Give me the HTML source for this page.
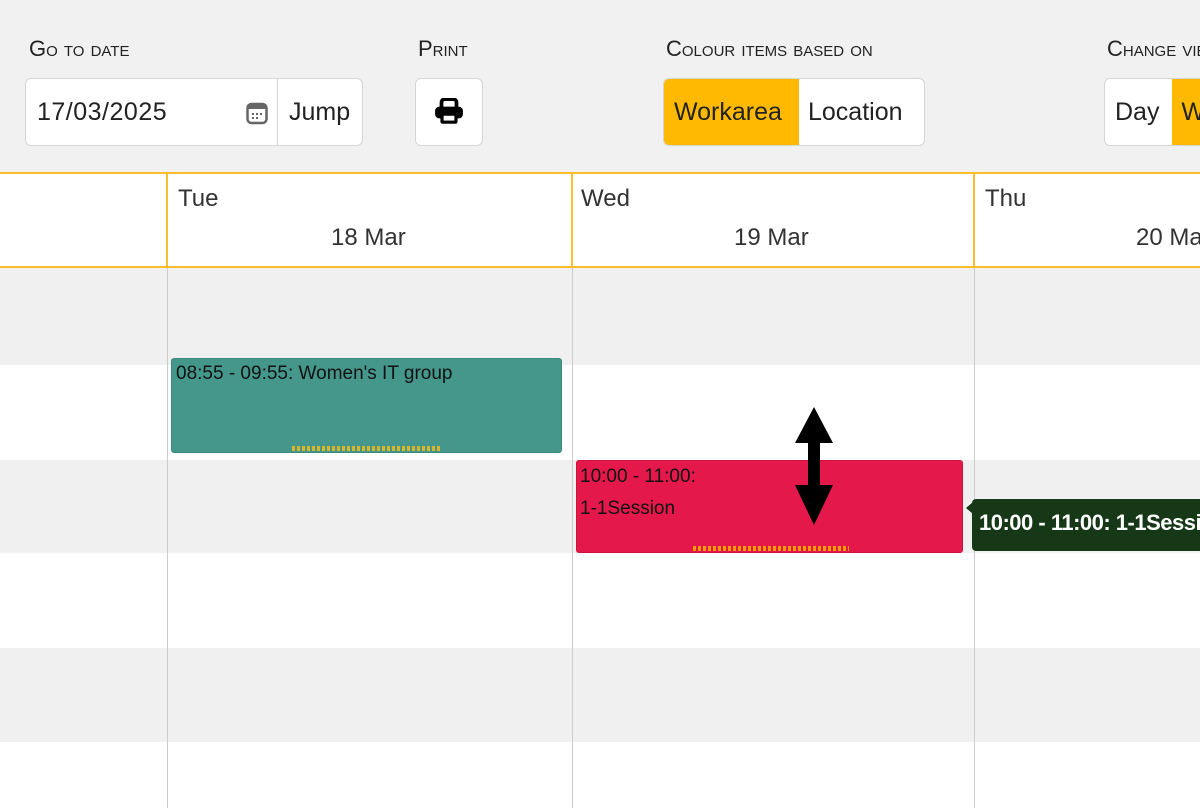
<!DOCTYPE html>
<html><head><meta charset="utf-8"><style>
*{box-sizing:border-box;margin:0;padding:0}
body{width:1200px;height:808px;overflow:hidden;background:#f1f1f1;font-family:"Liberation Sans",sans-serif;position:relative;color:#222}
.lbl{position:absolute;top:36px;font-size:22px;font-variant:small-caps;color:#222;white-space:nowrap}
.box{position:absolute;top:78px;height:68px;background:#fff;border:1px solid #d6d6d6;border-radius:6px;display:flex;align-items:center;font-size:25px;overflow:hidden;white-space:nowrap}
.seg{height:100%;display:flex;align-items:center;padding:0 9px}
.cal{position:absolute;top:0;left:0;width:1200px;height:808px}
.ev{position:absolute;border-radius:3px;font-size:19px;color:#111}
.h{position:absolute;font-size:24px;color:#333;white-space:nowrap}
</style></head><body>
<div class="lbl" style="left:29px">Go to date</div>
<div class="lbl" style="left:418px">Print</div>
<div class="lbl" style="left:666px">Colour items based on</div>
<div class="lbl" style="left:1107px">Change view</div>
<div class="box" style="left:25px;width:338px">
 <div class="seg" style="width:251px;padding-left:11px;position:relative;letter-spacing:0.5px">17/03/2025
  <svg style="position:absolute;right:9px;top:22px" width="22" height="24" viewBox="0 0 22 24"><rect x="1.5" y="3" width="19" height="19" rx="4" fill="none" stroke="#666" stroke-width="2.5"/><rect x="2" y="3" width="18" height="5" fill="#666"/><g fill="#666"><rect x="6" y="12" width="2" height="2"/><rect x="10" y="12" width="2" height="2"/><rect x="14" y="12" width="2" height="2"/><rect x="6" y="16" width="2" height="2"/><rect x="10" y="16" width="2" height="2"/></g></svg></div>
 <div class="seg" style="border-left:1px solid #d6d6d6;padding-left:11px">Jump</div>
</div>
<div class="box" style="left:415px;width:68px;justify-content:center">
 <svg width="30" height="28" viewBox="0 0 28 26"><path d="M7 9V4a3 3 0 0 1 3-3h8a3 3 0 0 1 3 3v5" fill="none" stroke="#000" stroke-width="3.5"/><rect x="1" y="8" width="26" height="11" rx="4" fill="#000"/><rect x="6" y="14" width="16" height="10" rx="2" fill="#000"/><rect x="9" y="16.5" width="10" height="4.5" fill="#fff"/></svg>
</div>
<div class="box" style="left:663px;width:262px">
 <div class="seg" style="background:#ffb900;width:135px;padding-left:10px">Workarea</div>
 <div class="seg">Location</div>
</div>
<div class="box" style="left:1104px;width:110px;border-right:none;border-radius:6px 0 0 6px">
 <div class="seg" style="width:72px;padding-left:10px">Day</div>
 <div class="seg" style="background:#ffb900;flex:1">W</div>
</div>

<div class="cal">
 <div style="position:absolute;top:172px;left:0;width:1200px;height:96px;background:#fff;border-top:2px solid #ffbd2e;border-bottom:2px solid #ffbd2e"></div>
 <div style="position:absolute;top:268px;left:0;width:1200px;height:97px;background:#f0f0f0"></div>
 <div style="position:absolute;top:365px;left:0;width:1200px;height:95px;background:#fff"></div>
 <div style="position:absolute;top:460px;left:0;width:1200px;height:93px;background:#f0f0f0"></div>
 <div style="position:absolute;top:553px;left:0;width:1200px;height:95px;background:#fff"></div>
 <div style="position:absolute;top:648px;left:0;width:1200px;height:94px;background:#f0f0f0"></div>
 <div style="position:absolute;top:742px;left:0;width:1200px;height:66px;background:#fff"></div>
 <div style="position:absolute;top:172px;left:166px;width:2px;height:96px;background:#ffbd2e"></div>
 <div style="position:absolute;top:172px;left:571px;width:2px;height:96px;background:#ffbd2e"></div>
 <div style="position:absolute;top:172px;left:973px;width:2px;height:96px;background:#ffbd2e"></div>
 <div style="position:absolute;top:268px;left:167px;width:1px;height:540px;background:#ccc"></div>
 <div style="position:absolute;top:268px;left:572px;width:1px;height:540px;background:#ccc"></div>
 <div style="position:absolute;top:268px;left:974px;width:1px;height:540px;background:#ccc"></div>
 <div class="h" style="top:185px;left:178px">Tue</div>
 <div class="h" style="top:224px;left:331px">18 Mar</div>
 <div class="h" style="top:185px;left:581px">Wed</div>
 <div class="h" style="top:224px;left:734px">19 Mar</div>
 <div class="h" style="top:185px;left:985px">Thu</div>
 <div class="h" style="top:224px;left:1136px">20 Mar</div>

 <div class="ev" style="left:171px;top:358px;width:391px;height:95px;background:#45978b;border:1px solid #3a8a7e;padding:4px 4px">08:55 - 09:55: Women's IT group
  <div style="position:absolute;left:120px;bottom:1px;width:150px;height:5px;background:repeating-linear-gradient(90deg,#d9b628 0 3px,transparent 3px 5px)"></div></div>
 <div class="ev" style="left:576px;top:460px;width:387px;height:93px;background:#e4184a;border:1px solid #d0103f;padding:0 3px;line-height:32px">10:00 - 11:00:<br>1-1Session
  <div style="position:absolute;left:116px;bottom:1px;width:156px;height:5px;background:repeating-linear-gradient(90deg,#ff9a00 0 3px,transparent 3px 5px)"></div></div>
 <svg style="position:absolute;left:791px;top:405px" width="46" height="122" viewBox="0 0 46 122"><polygon points="23,2 42,38 29,38 29,80 42,80 23,120 4,80 17,80 17,38 4,38" fill="#000"/></svg>
 <div style="position:absolute;left:972px;top:499px;width:240px;height:52px;background:#173817;border-radius:4px;color:#fff;font-size:22px;font-weight:bold;padding:11px 7px;white-space:nowrap;letter-spacing:-0.5px">10:00 - 11:00: 1-1Session</div>
 <div style="position:absolute;left:966px;top:502px;width:0;height:0;border-top:6px solid transparent;border-bottom:6px solid transparent;border-right:7px solid #173817"></div>
</div>
</body></html>
